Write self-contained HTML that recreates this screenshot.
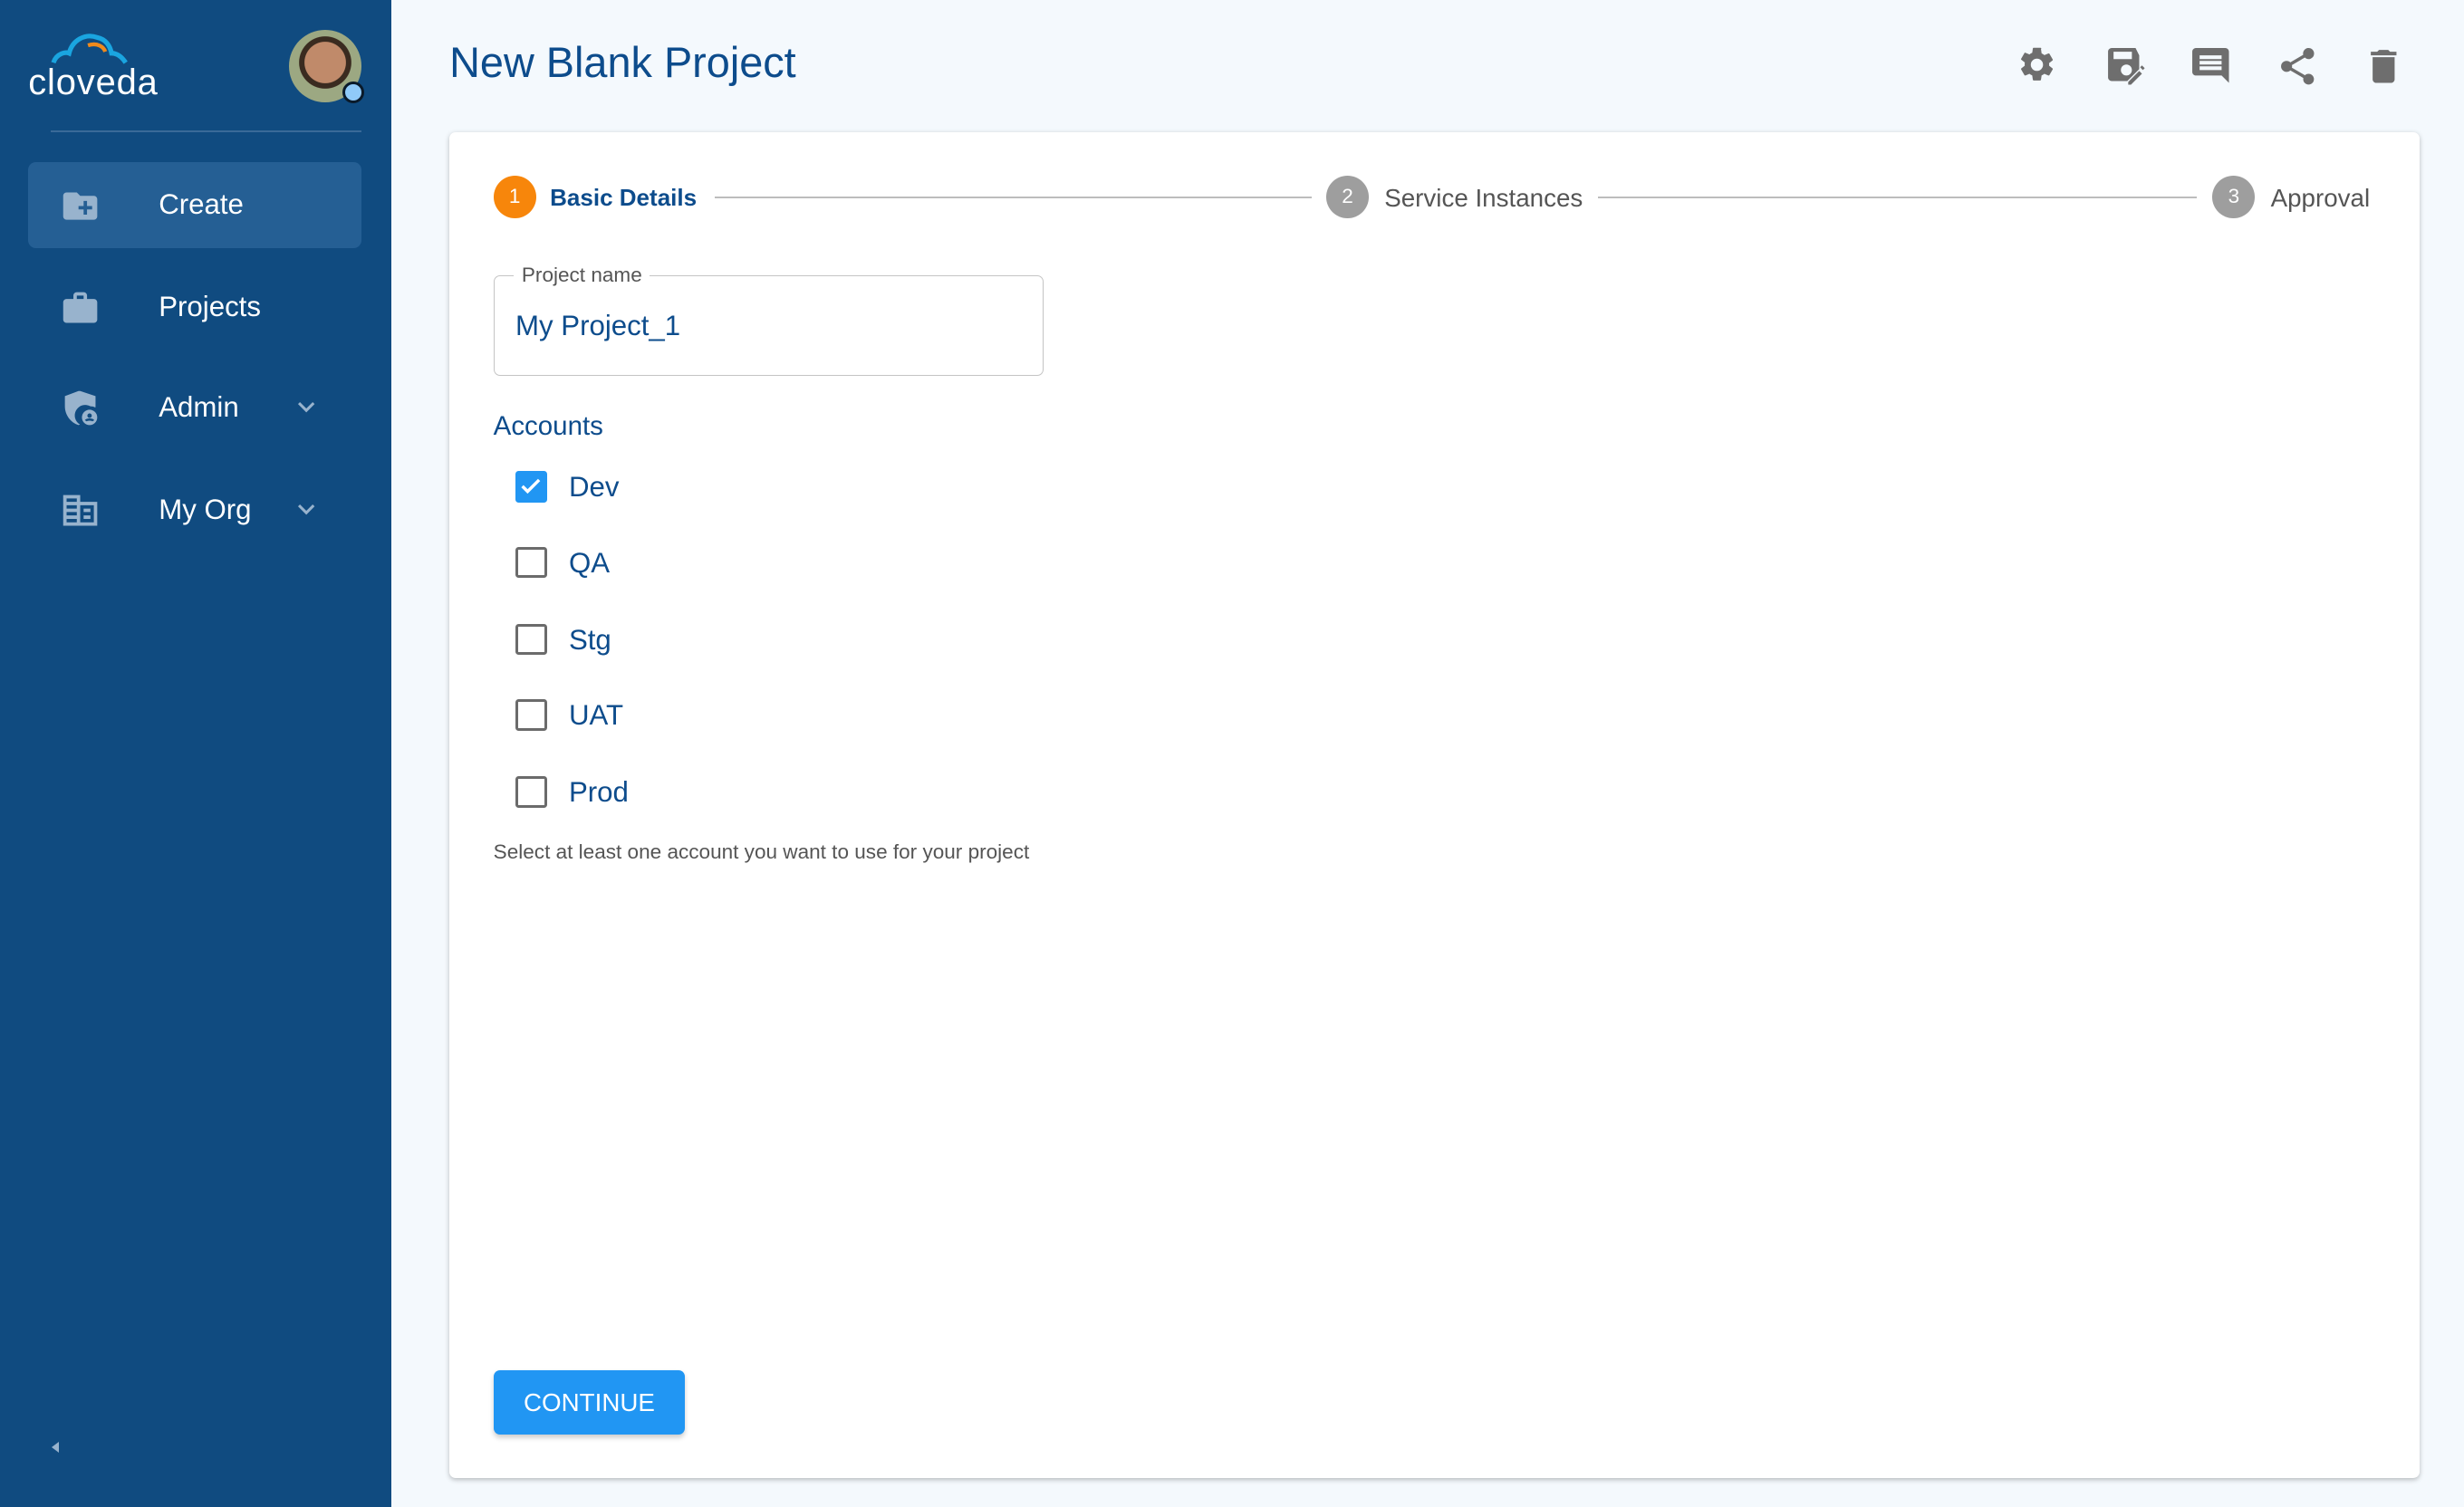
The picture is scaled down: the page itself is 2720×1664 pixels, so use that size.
<!DOCTYPE html>
<html><head><meta charset="utf-8"><style>
*{box-sizing:border-box;margin:0;padding:0}
html,body{width:2720px;height:1664px;overflow:hidden;background:#f4f9fd}
#w{width:1568px;height:959px;zoom:1.73469;position:relative;font-family:"Liberation Sans",sans-serif;background:#f4f9fd}
.sb{position:absolute;left:0;top:0;width:249px;height:959px;background:#104b80}
.abs{position:absolute}
.nav{position:absolute;left:18px;width:212px;height:55px;color:#fff;font-size:18px}
.nav .t{position:absolute;left:83px;top:17px}
.nav svg{position:absolute;left:20px;top:15px}
.chev{position:absolute;left:170px;top:18px}
.card{position:absolute;left:286px;top:84px;width:1254px;height:857px;background:#fff;border-radius:4px;box-shadow:0 1px 3px rgba(0,0,0,.25)}
.step{position:absolute;top:28px;width:27px;height:27px;border-radius:50%;color:#fff;font-size:13px;text-align:center;line-height:27px}
.sl{position:absolute;top:33px;font-size:16px}
.line{position:absolute;top:41px;height:1px;background:#bdbdbd}
.cb{position:absolute;left:42px;width:20px;height:20px;border:2px solid #6b6b6b;border-radius:2px}
.cl{position:absolute;left:76px;font-size:18px;color:#0d4c8c}
.ic{position:absolute;top:28px}
</style></head><body><div id="w">
<div class="sb">
 <svg class="abs" style="left:30px;top:18px" width="60" height="24" viewBox="0 0 60 24"><path d="M4 22 C6 16 12 15 14 16 C16 8 24 3 32 6 C37 7 40 11 41 16 C45 16 48 19 50 22" fill="none" stroke="#1aa5e0" stroke-width="3"/><path d="M26 11 C32 9 36 12 37 15" fill="none" stroke="#f08a1c" stroke-width="2.5"/></svg>
 <div class="abs" style="left:18px;top:40px;color:#fff;font-size:23px;letter-spacing:0.5px">cloveda</div>
 <div class="abs" style="left:184px;top:19px;width:46px;height:46px;border-radius:50%;background:radial-gradient(circle at 50% 45%,#c08a6a 0 38%,#3a2b20 39% 48%,#9ca882 49%)"></div>
 <div class="abs" style="left:218px;top:52px;width:14px;height:14px;border-radius:50%;background:#90caf9;border:2px solid #0a1a2a"></div>
 <div class="abs" style="left:32px;top:83px;width:198px;height:1px;background:#3a6a98"></div>
 <div class="nav" style="top:103px;background:#255f94;border-radius:5px"><svg width="26" height="26" viewBox="0 0 24 24"><path fill="#98b3cd" d="M20 6h-8l-2-2H4c-1.1 0-2 .9-2 2v12c0 1.1.9 2 2 2h16c1.1 0 2-.9 2-2V8c0-1.1-.9-2-2-2zm-1 8h-3v3h-2v-3h-3v-2h3V9h2v3h3v2z"/></svg><span class="t">Create</span></div>
 <div class="nav" style="top:168px"><svg width="26" height="26" viewBox="0 0 24 24"><path fill="#98b3cd" d="M20 7h-4V5c0-1.1-.9-2-2-2h-4C8.9 3 8 3.9 8 5v2H4c-1.1 0-2 .9-2 2v10c0 1.1.9 2 2 2h16c1.1 0 2-.9 2-2V9c0-1.1-.9-2-2-2zM10 5h4v2h-4V5z"/></svg><span class="t">Projects</span></div>
 <div class="nav" style="top:232px"><svg width="26" height="26" viewBox="0 0 24 24"><path fill="#98b3cd" d="M11 2 3 5v6c0 5 3.4 9.7 8 11 .3-.1.6-.2.9-.3A6 6 0 0 1 18 11c1 0 2 .2 2.9.7.1-.3.1-.6.1-.7V5l-9-3z"/><circle cx="17.5" cy="17.5" r="4.5" fill="#98b3cd"/><circle cx="17.5" cy="16.5" r="1.3" fill="#104b80"/><path d="M15.3 19.5c.6-1 3.8-1 4.4 0" stroke="#104b80" stroke-width="1.3" fill="none"/></svg><span class="t">Admin</span><svg class="chev" width="14" height="14" viewBox="0 0 24 24" style="left:170px;top:20px"><path d="M4 8l8 8 8-8" stroke="#98b3cd" stroke-width="3" fill="none"/></svg></div>
 <div class="nav" style="top:297px"><svg width="26" height="26" viewBox="0 0 24 24"><path fill="#98b3cd" d="M2 3h10v4h10v14H2V3zm2 2v2h6V5H4zm0 4v2h6V9H4zm0 4v2h6v-2H4zm0 4v2h6v-2H4zm8-8v10h8V9h-8zm2 2h4v2h-4v-2zm0 4h4v2h-4v-2z"/></svg><span class="t">My Org</span><svg class="chev" width="14" height="14" viewBox="0 0 24 24" style="left:170px;top:20px"><path d="M4 8l8 8 8-8" stroke="#98b3cd" stroke-width="3" fill="none"/></svg></div>
 <div class="abs" style="left:33px;top:918px;width:0;height:0;border-top:4px solid transparent;border-bottom:4px solid transparent;border-right:5px solid #98b3cd"></div>
</div>
<div class="abs" style="left:286px;top:24px;font-size:27px;color:#0d4c8c">New Blank Project</div>
<svg class="ic" style="left:1283px" width="26" height="26" viewBox="0 0 24 24"><path fill="#6e6e6e" d="M19.14 12.94c.04-.3.06-.61.06-.94s-.02-.64-.07-.94l2.03-1.58a.49.49 0 0 0 .12-.61l-1.92-3.32a.49.49 0 0 0-.59-.22l-2.39.96c-.5-.38-1.03-.7-1.62-.94l-.36-2.54A.48.48 0 0 0 13.92 2h-3.84c-.24 0-.43.17-.47.41l-.36 2.54c-.59.24-1.13.57-1.62.94l-2.39-.96a.48.48 0 0 0-.59.22L2.74 8.47c-.12.21-.08.47.12.61l2.03 1.58c-.05.3-.09.63-.09.94s.02.64.07.94l-2.03 1.58a.49.49 0 0 0-.12.61l1.92 3.32c.12.22.37.29.59.22l2.39-.96c.5.38 1.03.7 1.62.94l.36 2.54c.05.24.24.41.48.41h3.84c.24 0 .44-.17.47-.41l.36-2.54c.59-.24 1.13-.56 1.62-.94l2.39.96c.22.08.47 0 .59-.22l1.92-3.32a.49.49 0 0 0-.12-.61l-2.01-1.58zM12 15.6A3.6 3.6 0 1 1 12 8.4a3.6 3.6 0 0 1 0 7.2z"/></svg>
<svg class="ic" style="left:1338px" width="28" height="28" viewBox="0 0 24 24"><path fill="#6e6e6e" d="M17 2H4c-1.1 0-2 .9-2 2v14c0 1.1.9 2 2 2h8.5l6.5-6.5V6l-2-4zM12 17a3 3 0 1 1 0-6 3 3 0 0 1 0 6zm3-9H5V4h10v4z" transform="translate(1 0)"/><path fill="#6e6e6e" d="M14 22v-1.5l6-6 1.5 1.5-6 6H14zm8-8l-1.5-1.5 1-1L23 13l-1 1z"/></svg>
<svg class="ic" style="left:1393px" width="28" height="28" viewBox="0 0 24 24"><path fill="#6e6e6e" d="M21 4c0-1.1-.9-2-2-2H3c-1.1 0-2 .9-2 2v11c0 1.1.9 2 2 2h14l4 4V4zM17 14H5v-2h12v2zm0-3H5V9h12v2zm0-3H5V6h12v2z" transform="translate(1 0)"/></svg>
<svg class="ic" style="left:1448px" width="28" height="28" viewBox="0 0 24 24"><path fill="#6e6e6e" d="M18 16.08c-.76 0-1.44.3-1.96.77L8.91 12.7c.05-.23.09-.46.09-.7s-.04-.47-.09-.7l7.05-4.11A2.99 2.99 0 0 0 21 5a3 3 0 1 0-5.91.7L8.04 9.81A3 3 0 1 0 8.04 14.19l7.12 4.16c-.05.21-.08.43-.08.65A2.92 2.92 0 1 0 18 16.08z"/></svg>
<svg class="ic" style="left:1503px" width="28" height="28" viewBox="0 0 24 24"><path fill="#6e6e6e" d="M6 19c0 1.1.9 2 2 2h8c1.1 0 2-.9 2-2V7H6v12zM19 4h-3.5l-1-1h-5l-1 1H5v2h14V4z"/></svg>
<div class="card">
 <div class="step" style="left:28px;background:#f7860b">1</div>
 <div class="sl" style="left:64px;color:#0d4c8c;font-weight:bold;font-size:15px">Basic Details</div>
 <div class="line" style="left:169px;width:380px"></div>
 <div class="step" style="left:558px;background:#9e9e9e">2</div>
 <div class="sl" style="left:595px;color:#555">Service Instances</div>
 <div class="line" style="left:731px;width:381px"></div>
 <div class="step" style="left:1122px;background:#9e9e9e">3</div>
 <div class="sl" style="left:1159px;color:#555">Approval</div>
 <div class="abs" style="left:28px;top:91px;width:350px;height:64px;border:1px solid #c4c4c4;border-radius:4px"></div>
 <div class="abs" style="left:41px;top:84px;background:#fff;padding:0 5px;font-size:13px;color:#555">Project name</div>
 <div class="abs" style="left:42px;top:113px;font-size:18px;color:#0d4c8c">My Project_1</div>
 <div class="abs" style="left:28px;top:178px;font-size:17px;color:#0d4c8c">Accounts</div>
 <div class="cb" style="top:216px;background:#2196f3;border-color:#2196f3"><svg width="16" height="16" viewBox="0 0 24 24" style="display:block"><path d="M4 12l5 5 11-11" stroke="#fff" stroke-width="3" fill="none"/></svg></div><div class="cl" style="top:216px">Dev</div>
 <div class="cb" style="top:264px"></div><div class="cl" style="top:264px">QA</div>
 <div class="cb" style="top:313px"></div><div class="cl" style="top:313px">Stg</div>
 <div class="cb" style="top:361px"></div><div class="cl" style="top:361px">UAT</div>
 <div class="cb" style="top:410px"></div><div class="cl" style="top:410px">Prod</div>
 <div class="abs" style="left:28px;top:451px;font-size:13px;color:#555">Select at least one account you want to use for your project</div>
 <div class="abs" style="left:28px;top:788px;width:122px;height:41px;background:#2196f3;border-radius:4px;color:#fff;font-size:16px;text-align:center;line-height:41px;box-shadow:0 2px 3px rgba(0,0,0,.2)">CONTINUE</div>
</div>
</div></body></html>
